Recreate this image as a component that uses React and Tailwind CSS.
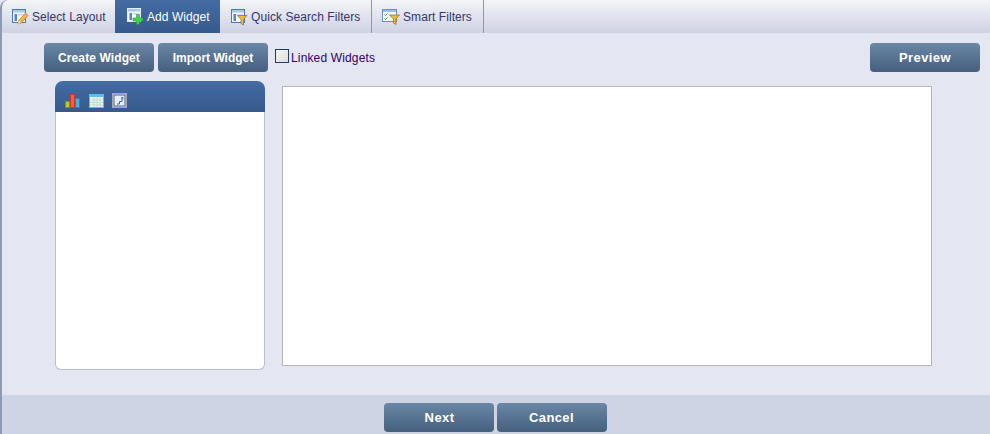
import React from 'react';

// shared window shape used by the tab icons
const WindowBase = ({ children, stroke = '#4a78b8', className = '' }) => (
    <svg width="18" height="18" viewBox="0 0 18 18" className={`block shrink-0 ${className}`}>
        <rect x="1.5" y="1.5" width="13" height="13" fill="#f6f9fd" stroke={stroke} />
        <rect x="2" y="2" width="12" height="2.5" fill="#a8c8ec" />
        <rect x="3.5" y="6" width="2.5" height="7" fill="#4f86c9" />
        <rect x="7" y="6" width="6" height="1.5" fill="#c9d8ec" />
        {children}
    </svg>
);

const PencilIcon = () => (
    <WindowBase>
        <path d="M7 16 L8 12 L14.5 5 L17 7.5 L10.5 15 Z" fill="#f2b544" stroke="#b9772a" strokeWidth="0.7" />
        <path d="M7 16 L8 12.5 L10 15 Z" fill="#f7e3b5" />
    </WindowBase>
);

const PlusIcon = () => (
    <WindowBase stroke="#e6edf7" className="-mt-[2px] overflow-visible">
        <path d="M10.5 7.5 h3 v3.5 h3.5 v3 h-3.5 v3.5 h-3 v-3.5 h-3.5 v-3 h3.5 Z" fill="#3fd64a" stroke="#1b8a33" strokeWidth="0.5" />
    </WindowBase>
);

const FunnelIcon = () => (
    <WindowBase>
        <path d="M7.5 7.5 H17 L13.5 11.5 V17 L11 15.5 V11.5 Z" fill="#f0b93c" stroke="#8f6a22" strokeWidth="0.7" />
    </WindowBase>
);

const SmartIcon = () => (
    <svg width="18" height="18" viewBox="0 0 18 18" className="block shrink-0">
        <rect x="0.5" y="1.5" width="14" height="12" fill="#f6f9fd" stroke="#6b8fbd" />
        <rect x="1" y="2" width="13" height="2" fill="#9cc0e8" />
        <path d="M2.5 6.5 l1 1 l2 -2 M2.5 10.5 l1 1 l2 -2" fill="none" stroke="#3aa63f" strokeWidth="1" />
        <path d="M7.5 7 H17.5 L14 11 V16.5 L11.5 15 V11 Z" fill="#f0b93c" stroke="#8f6a22" strokeWidth="0.7" />
    </svg>
);

const ChartIcon = () => (
    <svg width="16" height="14" viewBox="0 0 16 14" className="block">
        <rect x="0.5" y="7.5" width="4" height="6" fill="#a5d52a" stroke="#6c9a16" />
        <rect x="5.5" y="0.5" width="4" height="13" fill="#f2604c" stroke="#c9382a" />
        <rect x="10.5" y="4.5" width="4" height="9" fill="#45b0ea" stroke="#2a7fc0" />
    </svg>
);

const GridIcon = () => (
    <svg width="15" height="14" viewBox="0 0 15 14" className="block">
        <rect x="0.5" y="0.5" width="14" height="13" fill="#eef6f4" stroke="#52bdf0" />
        <rect x="1" y="1" width="13" height="2" fill="#56c3f2" />
        <path d="M1 6 H14 M1 8.5 H14 M1 11 H14 M5 3 V13 M8 3 V13 M11 3 V13" stroke="#b9dccf" strokeWidth="1" />
    </svg>
);

const ReportIcon = () => (
    <svg width="15" height="15" viewBox="0 0 15 15" className="block">
        <rect x="0.5" y="0.5" width="14" height="14" fill="#d4dce8" stroke="#a9a9a9" />
        <rect x="1.5" y="1.5" width="12" height="12" fill="#3f659a" />
        <rect x="2.5" y="2.5" width="10" height="10" fill="#e9eef7" />
        <path d="M5 11 H7.5 V8.5 H10 V5" fill="none" stroke="#3a649f" strokeWidth="1" />
        <path d="M9 4.5 H11 V6.5" fill="none" stroke="#3a649f" strokeWidth="0.8" />
    </svg>
);

const tabs = [
    { label: 'Select Layout', icon: <PencilIcon />, cls: 'w-[113px] pl-[9px]' },
    { label: 'Add Widget', icon: <PlusIcon />, cls: 'w-[105px] pl-[11px]', active: true },
    { label: 'Quick Search Filters', icon: <FunnelIcon />, cls: 'w-[152px] pl-[10px] border-r border-[#8d97a8]' },
    { label: 'Smart Filters', icon: <SmartIcon />, cls: 'w-[112px] pl-[10px] border-r border-[#8d97a8]' },
];

const Btn = ({ children, className = 'text-[12px]' }) => (
    <button className={`w-[110px] h-[29px] shrink-0 rounded-[4px] bg-gradient-to-b from-[#6b87a6] to-[#45607f] text-white font-bold ${className}`}>
        {children}
    </button>
);

export default function App() {
    return (
        <div className="w-[990px] h-[434px] flex flex-col overflow-hidden font-['Liberation_Sans',Arial,sans-serif] text-[12px] bg-[#e4e7f1]">
            {/* tabs */}
            <div className="h-[33px] flex bg-gradient-to-b from-[#f4f4f8] to-[#cdd3e3] rounded-tl-[8px] border-l-2 border-[#8a9cb5]">
                {tabs.map(t => (
                    <div
                        key={t.label}
                        className={`${t.cls} flex items-center gap-[3px] h-full ${t.active ? 'bg-gradient-to-b from-[#436ca3] to-[#375a8c] text-white' : 'text-[#35356b]'}`}
                    >
                        {t.icon}
                        <span className="tracking-[0.07px]">{t.label}</span>
                    </div>
                ))}
            </div>

            {/* body */}
            <div className="flex-1 flex flex-col border-l-2 border-[#8a9cb5]">
                <div className="flex-1 flex flex-col">
                    <div className="flex items-start pl-[42px] pr-[10px] mt-[10px]">
                        <Btn className="text-[12px] tracking-[0.1px]">Create Widget</Btn>
                        <Btn className="ml-[4px] text-[12px]">Import Widget</Btn>
                        <div className="flex items-start ml-[7px] mt-[6px] text-[#330066]">
                            <span className="w-[14px] h-[14px] border border-[#1f3f66] bg-gradient-to-br from-[#f6f6f2] to-[#dededa]"></span>
                            <span className="ml-[2px] tracking-[0.15px]">Linked Widgets</span>
                        </div>
                        <Btn className="ml-auto text-[13px] tracking-[0.4px]">Preview</Btn>
                    </div>

                    <div className="flex items-start pl-[53px] mt-[9px]">
                        <div className="w-[210px] h-[289px] flex flex-col">
                            <div className="h-[31px] flex items-end pl-[10px] pb-[4px] rounded-t-[8px] bg-gradient-to-b from-[#436ca3] to-[#375a8c]">
                                <ChartIcon />
                                <span className="ml-[8px]"><GridIcon /></span>
                                <span className="ml-[8px]"><ReportIcon /></span>
                            </div>
                            <div className="flex-1 bg-white border border-t-0 border-[#b4bfd0] rounded-b-[6px]"></div>
                        </div>
                        <div className="w-[650px] h-[280px] ml-[17px] mt-[5px] border border-[#b5b5bb] bg-white"></div>
                    </div>
                </div>

                {/* footer */}
                <div className="h-[39px] bg-[#cfd4e4] flex justify-center gap-[3px] pt-[8px] pr-[2px]">
                    <Btn className="text-[13px] tracking-[0.4px] pl-[2px]">Next</Btn>
                    <Btn className="text-[13px] tracking-[0.4px]">Cancel</Btn>
                </div>
            </div>
        </div>
    );
}
